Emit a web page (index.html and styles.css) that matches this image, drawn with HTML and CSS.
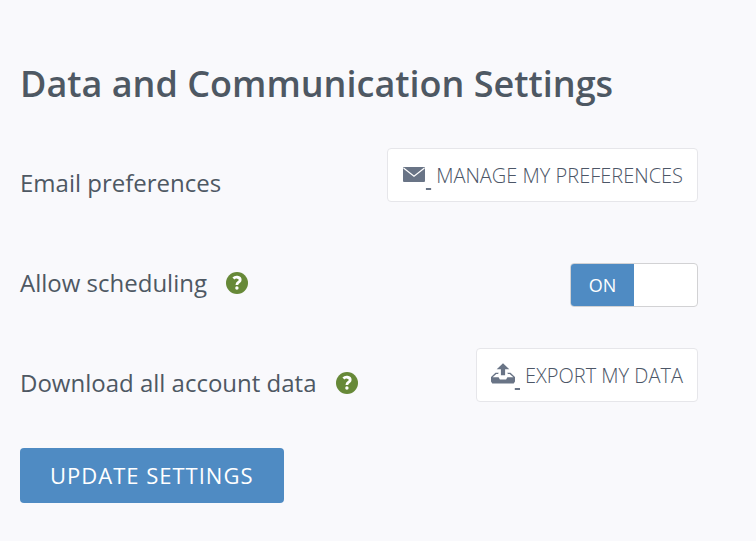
FILE: index.html
```
<!DOCTYPE html>
<html lang="en">
<head>
    <meta charset="utf-8">
    <title>Data and Communication Settings</title>
    <link rel="stylesheet" href="styles.css">
</head>
<body>
    <form class="settings">
        <h1 class="title">Data and Communication Settings</h1>

        <div class="row">
            <span class="name">Email preferences</span>
            <a class="button" href="#preferences"><span class="button-icon"><svg width="24" height="21" viewBox="0 1 24 21">
                <path fill="currentColor" d="M2 5h20a1 1 0 0 1 1 1v13a1 1 0 0 1-1 1H2a1 1 0 0 1-1-1V6a1 1 0 0 1 1-1z"/>
                <path fill="none" stroke="#fff" stroke-width="1.200" d="M1.500 6L12 14.300 22.500 6"/>
            </svg>&nbsp;</span><span class="button-text">MANAGE MY PREFERENCES</span></a>
        </div>

        <div class="row">
            <label class="name" for="scheduling">Allow scheduling</label>
            <button class="help" type="button" aria-label="Help">
                <svg width="22" height="22" viewBox="0 0 22 22">
                    <circle cx="11" cy="11" r="11" fill="#678938"/>
                    <path fill="none" stroke="#fff" stroke-width="2.800" d="M7.400 6.400C9 4.800 14.200 4.400 14.200 7.900c0 2.400-3.300 2.300-3.300 5.100"/>
                    <circle cx="10.900" cy="16" r="1.700" fill="#fff"/>
                </svg>
            </button>
            <label class="switch">
                <input class="switch-input" type="checkbox" id="scheduling" checked>
                <span class="switch-on">ON</span>
            </label>
        </div>

        <div class="row">
            <span class="name">Download all account data</span>
            <button class="help" type="button" aria-label="Help">
                <svg width="22" height="22" viewBox="0 0 22 22">
                    <circle cx="11" cy="11" r="11" fill="#678938"/>
                    <path fill="none" stroke="#fff" stroke-width="2.800" d="M7.400 6.400C9 4.800 14.200 4.400 14.200 7.900c0 2.400-3.300 2.300-3.300 5.100"/>
                    <circle cx="10.900" cy="16" r="1.700" fill="#fff"/>
                </svg>
            </button>
            <a class="button" href="#export"><span class="button-icon"><svg width="24" height="21" viewBox="0 1 24 21">
                <path fill="currentColor" d="M12 1.300l6.300 6h-4.200v6H9.900v-6H5.700z"/>
                <path fill="currentColor" d="M4.500 10.800h3.300l-.8 1.300H5.300L1.600 15.300h6l1.300 2.200h6.200l1.300-2.200h6l-3.700-3.200H17l-.8-1.300h3.300L24 15v4.500l-1.300 2.100H1.300L0 19.500V15z"/>
            </svg>&nbsp;</span><span class="button-text">EXPORT MY DATA</span></a>
        </div>

        <button class="submit" type="submit">UPDATE SETTINGS</button>
    </form>
</body>
</html>
```
FILE: styles.css
```
body {
    margin: 0;
    background: #f9f9fc;
    color: #4e5863;
    font-family: "Open Sans", sans-serif;
    font-size: 24px;
}

.settings {
    padding: 56px 58px 38px 20px;
}

.title {
    margin: 0 0 36px;
    font-size: 36px;
    font-weight: 600;
    line-height: 56px;
}

.row {
    display: flex;
    align-items: flex-start;
    min-height: 100px;
}

.name {
    margin-top: 16px;
    line-height: 38px;
}

.help {
    display: flex;
    margin-left: 19px;
    margin-top: 24px;
    padding: 0;
    border: none;
    border-radius: 50%;
    background: none;
    cursor: pointer;
}

.button {
    display: flex;
    margin-left: auto;
    padding: 12px 14px 10px;
    border: 1px solid #e6e6ea;
    border-radius: 4px;
    background: #fff;
    color: #697486;
    font-size: 20px;
    font-weight: 300;
    line-height: 30px;
    text-decoration: none;
}

.button-icon {
    margin-right: 5px;
    text-decoration: underline;
    text-decoration-thickness: 2px;
    text-underline-offset: 5px;
}

.button-icon svg {
    vertical-align: -1px;
}

.button-text {
    color: #4c5667;
}

.switch {
    display: flex;
    width: 126px;
    height: 42px;
    margin-left: auto;
    margin-top: 15px;
    border: 1px solid #d2d2d4;
    border-radius: 4px;
    background: #fff;
    overflow: hidden;
    cursor: pointer;
}

.switch-input {
    appearance: none;
    width: 0;
    margin: 0;
}

.switch-on {
    width: 50%;
    background: #4f8bc3;
    color: #fff;
    font-size: 18px;
    line-height: 42px;
    text-align: center;
    visibility: hidden;
}

.switch-input:checked + .switch-on {
    visibility: visible;
}

.submit {
    padding: 12px 30px;
    border: none;
    border-radius: 4px;
    background: #4f8bc3;
    color: #fff;
    font-family: inherit;
    font-size: 22px;
    line-height: 31px;
    letter-spacing: 1px;
    cursor: pointer;
}
```
